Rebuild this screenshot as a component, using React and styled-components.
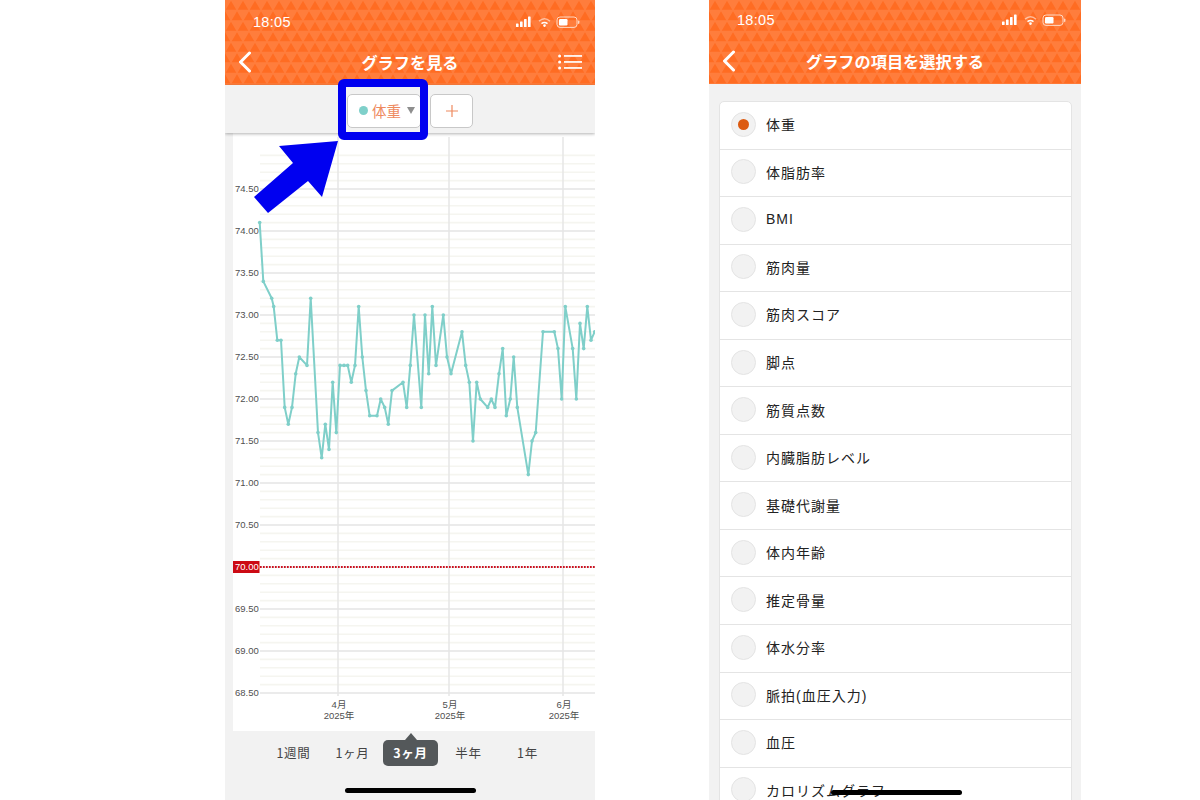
import React from 'react';
import styled, { createGlobalStyle } from 'styled-components';

const triangles = encodeURIComponent(
  `<svg xmlns="http://www.w3.org/2000/svg" width="12" height="21"><rect width="12" height="21" fill="#ff7d3c"/><path fill="#ff6c22" d="M.7 9.8 6 .8l5.300 9zM-5.300 20.300 0 11.300l5.300 9zM6.700 20.300 12 11.300l5.300 9z"/></svg>`
);

const GlobalStyle = createGlobalStyle`
  html, body {
    margin: 0;
    background: #fff;
  }
  body {
    font-family: "Liberation Sans", "Noto Sans CJK JP", sans-serif;
  }
`;

const Page = styled.div`
  position: relative;
  width: 1200px;
  height: 800px;
  overflow: hidden;
  display: flex;
  gap: 114px;
  padding-left: 225px;
  box-sizing: border-box;
`;

const Phone = styled.div`
  position: relative;
  width: ${p => p.$width}px;
  height: 800px;
  overflow: hidden;
  background: #f2f2f2;
  flex: none;
  display: flex;
  flex-direction: column;
`;

const Header = styled.header`
  height: ${p => p.$height}px;
  flex: none;
  box-sizing: border-box;
  color: #fff;
  background: #ff7431 url("data:image/svg+xml,${triangles}");
`;

const StatusBar = styled.div`
  height: ${p => p.$height}px;
  box-sizing: border-box;
  padding: 0 15px 0 28px;
  display: flex;
  align-items: center;
  justify-content: space-between;
`;

const Time = styled.span`
  font-size: 14.5px;
  letter-spacing: 0.3px;
`;

const NavBar = styled.div`
  height: ${p => p.$height}px;
  box-sizing: border-box;
  padding: 0 13px;
  display: grid;
  grid-template-columns: 44px 1fr 44px;
  align-items: center;
`;

const NavTitle = styled.h1`
  margin: 0;
  text-align: center;
  font-family: "Noto Sans CJK JP", sans-serif;
  font-size: 16.2px;
  font-weight: 700;
  line-height: 1;
`;

const MenuCell = styled.div`
  display: flex;
  justify-content: flex-end;
`;

const Toolbar = styled.div`
  position: relative;
  z-index: 1;
  height: 48px;
  flex: none;
  box-sizing: border-box;
  padding-top: 3px;
  display: flex;
  align-items: center;
  justify-content: center;
  gap: 9px;
  background: #f2f2f2;
  box-shadow: 0 1px 3px rgba(0, 0, 0, 0.3);
`;

const ToolButton = styled.button`
  height: 34px;
  width: ${p => p.$width}px;
  padding: 0 0 0 ${p => p.$inset || 0}px;
  box-sizing: border-box;
  background: #fff;
  border: 1px solid #c8c8c8;
  border-radius: 5px;
  color: #ee8a5f;
  font-family: "Noto Sans CJK JP", sans-serif;
  font-size: 14.5px;
  display: flex;
  align-items: center;
  justify-content: center;
  gap: 4px;
`;

const Dot = styled.span`
  width: 9px;
  height: 9px;
  border-radius: 50%;
  background: #7fd0ca;
`;

const Caret = styled.span`
  width: 0;
  height: 0;
  margin-left: 2px;
  border-left: 4px solid transparent;
  border-right: 4px solid transparent;
  border-top: 7px solid #8e8e8e;
`;

const ChartArea = styled.div`
  flex: none;
  height: 598px;
  margin-left: 8px;
  background: #fff;
`;

const ChartSvg = styled.svg`
  display: block;
`;

const AxisText = styled.text`
  font-family: "Liberation Sans", "Noto Sans CJK JP", sans-serif;
  font-size: 9.5px;
  fill: ${p => p.$fill || '#4f4f4f'};
  dominant-baseline: central;
  text-anchor: ${p => p.$anchor || 'start'};
`;

const RangeBar = styled.div`
  padding: 9px 0 0 39px;
  display: flex;
`;

const RangeItem = styled.div`
  position: relative;
  width: ${p => (p.$active ? 55 : 59)}px;
  margin: ${p => (p.$active ? '0 1px' : '0')};
  height: 26px;
  flex: none;
  box-sizing: border-box;
  padding-bottom: 2px;
  display: flex;
  align-items: center;
  justify-content: center;
  border-radius: 5px;
  font-family: "Noto Sans CJK JP", sans-serif;
  font-size: 12.5px;
  letter-spacing: 0.7px;
  font-weight: ${p => (p.$active ? 700 : 400)};
  color: ${p => (p.$active ? '#fff' : '#444')};
  background: ${p => (p.$active ? '#54585a' : 'transparent')};

  ${p => p.$active && `
    &::before {
      content: "";
      position: absolute;
      top: -7px;
      left: 50%;
      margin-left: -6px;
      border-left: 6px solid transparent;
      border-right: 6px solid transparent;
      border-bottom: 7px solid #54585a;
    }
  `}
`;

const HomeIndicator = styled.div`
  position: absolute;
  left: ${p => p.$left}px;
  bottom: ${p => p.$bottom}px;
  width: 131px;
  height: 5px;
  border-radius: 3px;
  background: #000;
`;

const ListWrap = styled.div`
  padding: 17px 9px 0 10px;
`;

const Card = styled.ul`
  margin: 0;
  padding: 0;
  list-style: none;
  background: #fff;
  border: 1px solid #e4e4e4;
  border-radius: 5px;
`;

const Row = styled.li`
  height: 47.55px;
  box-sizing: border-box;
  padding: 0 0 2px 10.5px;
  display: flex;
  align-items: center;
  gap: 10.5px;
  border-bottom: 1.5px solid #e4e4e4;
  font-family: "Liberation Sans", "Noto Sans CJK JP", sans-serif;
  font-size: 14px;
  letter-spacing: 1px;
  color: #222;
`;

const Radio = styled.span`
  position: relative;
  width: 25px;
  height: 25px;
  flex: none;
  box-sizing: border-box;
  border-radius: 50%;
  background: #f2f2f2;
  border: 1px solid #e4e4e4;

  ${p => p.$checked && `
    &::after {
      content: "";
      position: absolute;
      top: 6px;
      left: 6px;
      width: 11px;
      height: 11px;
      border-radius: 50%;
      background: #dc5a10;
    }
  `}
`;

const Highlight = styled.div`
  position: absolute;
  z-index: 2;
  left: 338px;
  top: 79px;
  width: 90px;
  height: 61px;
  box-sizing: border-box;
  border: 8px solid #0000f0;
  border-radius: 6px;
`;

const Arrow = styled.svg`
  position: absolute;
  z-index: 2;
  left: 250px;
  top: 138px;
`;

const ySpot = v => 98 + (74 - v) * 84;

const points = [
  [259.7, 74.1], [263.3, 73.4], [271.7, 73.2], [273.7, 73.1], [277.3, 72.7], [281, 72.7], [284.7, 71.9],
  [288.3, 71.7], [292, 71.9], [295.7, 72.3], [299.3, 72.5], [307, 72.4], [310.7, 73.2], [318, 71.6],
  [321.7, 71.3], [325.3, 71.7], [329, 71.4], [332.7, 72.2], [336.3, 71.6], [340, 72.4], [344, 72.4],
  [347.7, 72.4], [351.3, 72.2], [355, 72.4], [358.7, 73.1], [362.3, 72.5], [366, 72.1], [369.7, 71.8],
  [377, 71.8], [380.7, 72.0], [384.7, 71.9], [388.3, 71.7], [392, 72.1], [403, 72.2], [406.7, 71.9],
  [410.3, 72.4], [414, 73.0], [421.3, 71.9], [425, 73.0], [428.7, 72.3], [432.3, 73.1], [436, 72.4],
  [443.3, 73.0], [447, 72.5], [451, 72.3], [462, 72.8], [465.7, 72.4], [469.3, 72.2], [473, 71.5],
  [476.7, 72.2], [480.3, 72.0], [487.7, 71.9], [491.3, 72.0], [495, 71.9], [499, 72.3], [502.7, 72.6],
  [506.3, 71.8], [510.3, 72.0], [513.7, 72.5], [517.3, 71.9], [528.3, 71.1], [532, 71.5], [535.7, 71.6],
  [543, 72.8], [554.3, 72.8], [558, 72.6], [561.7, 72.0], [565.3, 73.1], [572.7, 72.6], [576.3, 72.0],
  [580, 72.9], [583.7, 72.6], [587.3, 73.1], [591, 72.7], [594.7, 72.8],
].map(([x, v]) => [x - 233, ySpot(v)]);

const months = [
  { x: 105, label: '4月' },
  { x: 216, label: '5月' },
  { x: 330, label: '6月' },
];

const gridSteps = Array.from({ length: 65 }, (_, i) => 74.9 - i * 0.1);
const yLabels = ['74.50', '74.00', '73.50', '73.00', '72.50', '72.00', '71.50', '71.00', '70.50', '69.50', '69.00', '68.50'];

function Chart() {
  return (
    <ChartSvg width="362" height="598">
      {gridSteps.map((v, i) => {
        const major = (i - 4) % 5 === 0;
        return (
          <line
            key={i}
            x1="27"
            x2="362"
            y1={ySpot(v)}
            y2={ySpot(v)}
            stroke={major ? '#e4e4e4' : '#f5f5f0'}
            strokeWidth={major ? 1.4 : 1.6}
          />
        );
      })}
      {months.map(m => (
        <line key={m.x} x1={m.x} x2={m.x} y1="4" y2="563" stroke="#e6e6e6" strokeWidth="1.5" />
      ))}
      {yLabels.map(v => (
        <AxisText key={v} x="2" y={ySpot(Number(v)) - 0.7}>{v}</AxisText>
      ))}
      {months.map(m => (
        <g key={m.label}>
          <AxisText $anchor="middle" x={m.x + 1} y="571.5">{m.label}</AxisText>
          <AxisText $anchor="middle" x={m.x + 1} y="582.5">2025年</AxisText>
        </g>
      ))}
      <rect x="0" y={ySpot(70) - 6} width="26.5" height="12" fill="#cc0a14" />
      <AxisText $fill="#fff" x="2" y={ySpot(70) - 0.5}>70.00</AxisText>
      <line x1="27" x2="362" y1={ySpot(70)} y2={ySpot(70)} stroke="#cc1020" strokeWidth="1.8" strokeDasharray="1.7 1.3" />
      <polyline
        fill="none"
        stroke="#7fcfc9"
        strokeWidth="2"
        strokeLinejoin="round"
        points={points.map(p => p.join(',')).join(' ')}
      />
      {points.map(([x, y]) => (
        <circle key={x} cx={x} cy={y} r="1.8" fill="#7fcfc9" />
      ))}
    </ChartSvg>
  );
}

function SignalIcons() {
  return (
    <svg width="64" height="12" viewBox="0 0 64 12">
      <g fill="#fff">
        <rect x="0" y="7.5" width="2.6" height="3.5" rx="0.6" />
        <rect x="4" y="5.5" width="2.6" height="5.5" rx="0.6" />
        <rect x="8" y="3" width="2.6" height="8" rx="0.6" />
        <rect x="12" y="0.5" width="2.6" height="10.5" rx="0.6" />
      </g>
      <g fill="none" stroke="#fff" strokeWidth="1.5" transform="translate(1.5 0)">
        <path d="M21.5 5.2c3.6-3 7.6-3 11 0" opacity="0.55" />
        <path d="M24 7.6c2-1.6 4-1.6 6 0" />
        <circle cx="27" cy="9.6" r="0.6" fill="#fff" />
      </g>
      <rect x="41" y="1" width="20" height="10.4" rx="3" fill="none" stroke="#ffd9c4" strokeWidth="1" />
      <rect x="43" y="3" width="8.5" height="6.4" rx="1.2" fill="#fff" />
      <rect x="62" y="4.5" width="1.4" height="3.4" rx="0.7" fill="#ffd9c4" />
    </svg>
  );
}

function BackIcon() {
  return (
    <svg width="14" height="22" viewBox="0 0 14 22">
      <path d="M11.5 2 2.5 11l9 9" fill="none" stroke="#fff" strokeWidth="3" strokeLinecap="round" strokeLinejoin="round" />
    </svg>
  );
}

function MenuIcon() {
  return (
    <svg width="24" height="16" viewBox="0 0 24 16">
      <g fill="#fff">
        <circle cx="1.6" cy="2" r="1.5" />
        <circle cx="1.6" cy="8" r="1.5" />
        <circle cx="1.6" cy="14" r="1.5" />
        <rect x="6" y="1.1" width="18" height="1.7" />
        <rect x="6" y="7.1" width="18" height="1.7" />
        <rect x="6" y="13.1" width="18" height="1.7" />
      </g>
    </svg>
  );
}

function PlusIcon() {
  return (
    <svg width="12" height="12" viewBox="0 0 12 12">
      <path d="M6 0v12M0 6h12" stroke="#ee8a5f" strokeWidth="1.2" />
    </svg>
  );
}

const ranges = ['1週間', '1ヶ月', '3ヶ月', '半年', '1年'];

const items = [
  '体重', '体脂肪率', 'BMI', '筋肉量', '筋肉スコア', '脚点', '筋質点数', '内臓脂肪レベル',
  '基礎代謝量', '体内年齢', '推定骨量', '体水分率', '脈拍(血圧入力)', '血圧', 'カロリズムグラフ',
];

export default function App() {
  return (
    <Page>
      <GlobalStyle />
      <Phone $width={370}>
        <Header $height={85}>
          <StatusBar $height={44}>
            <Time>18:05</Time>
            <SignalIcons />
          </StatusBar>
          <NavBar $height={36}>
            <BackIcon />
            <NavTitle>グラフを見る</NavTitle>
            <MenuCell><MenuIcon /></MenuCell>
          </NavBar>
        </Header>
        <Toolbar>
          <ToolButton $width={74} $inset={6}>
            <Dot />
            体重
            <Caret />
          </ToolButton>
          <ToolButton $width={43}><PlusIcon /></ToolButton>
        </Toolbar>
        <ChartArea>
          <Chart />
        </ChartArea>
        <RangeBar>
          {ranges.map((r, i) => (
            <RangeItem key={r} $active={i === 2}>{r}</RangeItem>
          ))}
        </RangeBar>
        <HomeIndicator $left={120} $bottom={7} />
      </Phone>
      <Phone $width={372}>
        <Header $height={84}>
          <StatusBar $height={40}>
            <Time>18:05</Time>
            <SignalIcons />
          </StatusBar>
          <NavBar $height={42}>
            <BackIcon />
            <NavTitle>グラフの項目を選択する</NavTitle>
            <span />
          </NavBar>
        </Header>
        <ListWrap>
          <Card>
            {items.map((item, i) => (
              <Row key={item}>
                <Radio $checked={i === 0} />
                {item}
              </Row>
            ))}
          </Card>
        </ListWrap>
        <HomeIndicator $left={122} $bottom={5} />
      </Phone>
      <Highlight />
      <Arrow width="90" height="80" viewBox="250 138 90 80">
        <path d="M279 146 338 141 322 197 308 181 268 213 254 197 293 163z" fill="#0000f0" />
      </Arrow>
    </Page>
  );
}
